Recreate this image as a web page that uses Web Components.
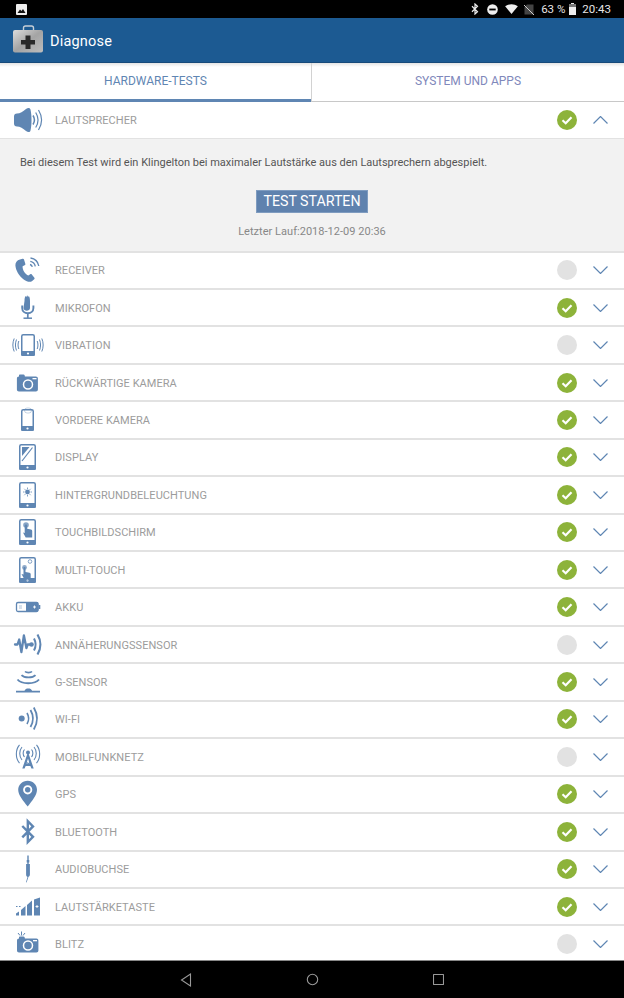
<!DOCTYPE html>
<html lang="de">
<head>
<meta charset="utf-8">
<title>Diagnose</title>
<style>
  html, body { margin: 0; padding: 0; background: #fff; }
  body { font-family: Roboto, "Liberation Sans", sans-serif; width: 624px; height: 998px; overflow: hidden; }
</style>
</head>
<body>
<x-diagnose-app>
  <x-status-bar slot="status"></x-status-bar>
  <x-app-bar slot="bar" title="Diagnose"></x-app-bar>
  <x-tabs slot="tabs"></x-tabs>
  <x-test-row slot="list" icon="speaker" label="LAUTSPRECHER" state="ok" open>
    <x-test-detail
      text="Bei diesem Test wird ein Klingelton bei maximaler Lautstärke aus den Lautsprechern abgespielt."
      action="TEST STARTEN"
      last="Letzter Lauf:2018-12-09 20:36"></x-test-detail>
  </x-test-row>
  <x-test-row slot="list" icon="receiver" label="RECEIVER"></x-test-row>
  <x-test-row slot="list" icon="mic" label="MIKROFON" state="ok"></x-test-row>
  <x-test-row slot="list" icon="vibration" label="VIBRATION"></x-test-row>
  <x-test-row slot="list" icon="camera" label="RÜCKWÄRTIGE KAMERA" state="ok"></x-test-row>
  <x-test-row slot="list" icon="frontcam" label="VORDERE KAMERA" state="ok"></x-test-row>
  <x-test-row slot="list" icon="display" label="DISPLAY" state="ok"></x-test-row>
  <x-test-row slot="list" icon="backlight" label="HINTERGRUNDBELEUCHTUNG" state="ok"></x-test-row>
  <x-test-row slot="list" icon="touch" label="TOUCHBILDSCHIRM" state="ok"></x-test-row>
  <x-test-row slot="list" icon="multitouch" label="MULTI-TOUCH" state="ok"></x-test-row>
  <x-test-row slot="list" icon="battery" label="AKKU" state="ok"></x-test-row>
  <x-test-row slot="list" icon="proximity" label="ANNÄHERUNGSSENSOR"></x-test-row>
  <x-test-row slot="list" icon="gsensor" label="G-SENSOR" state="ok"></x-test-row>
  <x-test-row slot="list" icon="wifi" label="WI-FI" state="ok"></x-test-row>
  <x-test-row slot="list" icon="mobile" label="MOBILFUNKNETZ"></x-test-row>
  <x-test-row slot="list" icon="gps" label="GPS" state="ok"></x-test-row>
  <x-test-row slot="list" icon="bluetooth" label="BLUETOOTH" state="ok"></x-test-row>
  <x-test-row slot="list" icon="audio" label="AUDIOBUCHSE" state="ok"></x-test-row>
  <x-test-row slot="list" icon="volume" label="LAUTSTÄRKETASTE" state="ok"></x-test-row>
  <x-test-row slot="list" icon="flash" label="BLITZ"></x-test-row>
  <x-nav-bar slot="nav"></x-nav-bar>
</x-diagnose-app>

<script>
// icons are drawn in a 55x32 box: x is the screen x, y 16 is the middle of the row
const PHONE = (x, y, w, h) => `
  <rect x="${x + .75}" y="${y + .75}" width="${w - 1.5}" height="${h - 1.5}" rx="1.5" fill="none" stroke="currentColor" stroke-width="1.5"/>
  <path d="M${x} ${y + h - 5}h${w}v3.5a1.5 1.5 0 0 1-1.5 1.5h-${w - 3}a1.5 1.5 0 0 1-1.5-1.5z" fill="currentColor"/>
  <circle cx="${x + w / 2}" cy="${y + h - 2.5}" r="1.1" fill="#fff"/>`;

const ICONS = {
  speaker: `<path d="M17 9.500c3 0 6-2 9-4.500 2-1.600 4-1.500 4.500.5.800 3.500 1 7 1 10.500s-.2 7-1 10.500c-.5 2-2.500 2.100-4.500.5-3-2.500-6-4.500-9-4.500-2 0-3-1.300-3-3v-7c0-1.700 1-3 3-3z" fill="currentColor"/>
    <g fill="none" stroke="currentColor"><path d="M33 11.500c1.800 2.800 1.800 6.200 0 9" stroke-width="1.500"/><path d="M35.700 8.500c3 4.800 3 10.200 0 15" stroke-width="1.200"/><path d="M38.500 6c4 6.500 4 13.500 0 20" stroke-width="1.200"/></g>`,
  receiver: `<path d="M20 5.500l2.500-.8c.8-.2 1.300.1 1.500.8l1.300 4.200c.2.700 0 1.200-.7 1.500l-2 1c-.3 3.500 2.500 8 5.800 9.300l1.800-1.300c.6-.4 1.200-.3 1.600.2l2.600 3.400c.4.600.3 1.100-.2 1.500l-2 1.600c-2 1.500-5 1-8.500-1.500-4.700-3.300-8-9-8.300-13.800-.2-3 1.500-5.300 4.600-6.100z" fill="currentColor"/>
    <g fill="none" stroke="currentColor" stroke-width="1.300"><path d="M30 10.500c1.200.3 2 1 2.300 2.300"/><path d="M30.300 7.300c2.800.5 4.500 2.300 5 5"/><path d="M30.500 4c4.500.7 7.500 3.500 8.300 8"/></g>`,
  mic: `<path d="M24.500 9c0-2.200.3-4 1-5l.8 1 .9-1.800.9 1.800.8-1c.7 1 1.100 2.800 1.100 5v7c0 3.500-6.500 3.500-6.500 0z" fill="currentColor"/>
    <path d="M22.200 13.500v2.500c0 3.300 2.500 5.300 5.600 5.300s5.600-2 5.600-5.300v-2.500" fill="none" stroke="currentColor" stroke-width="1.900"/>
    <path d="M27.800 21v5" fill="none" stroke="currentColor" stroke-width="1.700"/><path d="M23.500 26.200h8.500" fill="none" stroke="currentColor" stroke-width="1.500"/>`,
  vibration: PHONE(21, 5, 14, 22) + `<g fill="none" stroke="currentColor" stroke-width="1"><path d="M18.800 12c-1 2.500-1 5.500 0 8M16.500 10.500c-1.400 3.500-1.400 7.500 0 11M14.200 9.500c-1.800 4.300-1.800 8.700 0 13M37.200 12c1 2.500 1 5.500 0 8M39.500 10.500c1.400 3.500 1.400 7.500 0 11M41.800 9.500c1.800 4.300 1.800 8.700 0 13"/></g>`,
  camera: `<path d="M19 9.500v-1c0-.7.4-1 1-1h3.500c.6 0 1 .3 1.200 1l.2 1h11c1.200 0 2 .8 2 2v11c0 1.200-.8 2-2 2h-17c-1.200 0-2-.8-2-2v-11c0-1.200.8-2 2-2z" fill="currentColor"/>
    <circle cx="28" cy="17.500" r="4.500" fill="none" stroke="#fff" stroke-width="1.500"/><rect x="32.500" y="11" width="4" height="1.300" fill="#fff"/>`,
  frontcam: `<rect x="24.500" y="4" width="7" height="5" rx="2.500" fill="none" stroke="currentColor" stroke-width=".6" opacity=".6"/>` + PHONE(21, 5, 13, 22),
  display: PHONE(19, 3, 17, 26) + `<path d="M22 6h7.500l-7.500 9z" fill="currentColor"/><path d="M22 20l10.500-13.500" stroke="currentColor" stroke-width="1.200" fill="none"/>`,
  backlight: PHONE(19, 3, 17, 26) + `<circle cx="27.500" cy="13" r="2.400" fill="currentColor"/><path d="M27.500 8.500v1.500M27.500 16v1.500M23 13h1.500M30.500 13H32M24.300 9.800l1 1M29.700 15.200l1 1M30.700 9.800l-1 1M25.300 15.200l-1 1" stroke="currentColor" stroke-width=".8" fill="none"/>`,
  touch: PHONE(19, 3, 17, 26) + `<circle cx="26" cy="9" r="2.800" fill="currentColor" opacity=".75"/><path d="M24.700 9.500c0-1.500 2.500-1.500 2.500 0v3.200l3.800.8c.8.200 1.200.7 1.200 1.500v6.500h-6.500l-2.700-5 1.700.6z" fill="currentColor"/>`,
  multitouch: PHONE(19, 3, 17, 26) + `<circle cx="30" cy="7.500" r="1.800" fill="none" stroke="currentColor" stroke-width="1" opacity=".75"/><circle cx="24.500" cy="13.500" r="2.400" fill="currentColor" opacity=".7"/><path d="M23.500 14c0-1.200 2-1.200 2 0v4l4 .8c.8.200 1.200.7 1.200 1.500v4.700h-6.500l-2.700-5 2 .6z" fill="currentColor"/><path d="M21.500 24c1.800 3 8 3 10 0" stroke="currentColor" fill="none" stroke-width=".7"/>`,
  battery: `<rect x="16.500" y="11.500" width="21.500" height="9" rx="1.500" fill="none" stroke="currentColor" stroke-width="1.300"/>
    <path d="M26 11h10.500c1.200 0 2 .8 2 2v6c0 1.200-.8 2-2 2H26z" fill="currentColor"/><rect x="38.500" y="14" width="1.800" height="4" fill="currentColor"/>
    <rect x="19" y="14" width="3" height="4" fill="currentColor" opacity=".25"/><path d="M33 16h3M34.500 14.500v3" stroke="#fff" stroke-width=".9"/>`,
  proximity: `<path d="M15 15.500h2.500l1.700-5 2.200 12.500 2.500-16.500 2.500 12.500 1.300-3.500h3" fill="none" stroke="currentColor" stroke-width="2.300" stroke-linejoin="round" stroke-linecap="round"/>
    <circle cx="31.500" cy="15.500" r="2.300" fill="currentColor"/>
    <path d="M34 9.500c2 3.700 2 8.300 0 12" fill="none" stroke="currentColor" stroke-width="2"/><path d="M37.500 5.500c3.800 6.200 3.800 14 0 20" fill="none" stroke="currentColor" stroke-width="2.200"/>`,
  gsensor: `<g fill="none" stroke="currentColor"><path d="M25 5.500c1.500 1.400 5.500 1.400 7 0" stroke-width="1.700"/><path d="M21.500 9.200c2.800 3 11.200 3 14 0" stroke-width="1.800"/><path d="M17.500 13.500c4 5 17.500 5 21.500 0" stroke-width="1.900"/></g>
    <path d="M16 24.700h8.500c.8-1.700 1.800-2.200 3.800-2.200s3 .5 3.800 2.200H40v1.800H16z" fill="currentColor"/>`,
  wifi: `<circle cx="21.700" cy="15.500" r="3" fill="currentColor"/><g fill="none" stroke="currentColor"><path d="M27 10c2 3.300 2 7.700 0 11" stroke-width="1.600"/><path d="M30.500 7c3 5.200 3 11.800 0 17" stroke-width="1.800"/><path d="M33.800 4.500c4 6.800 4 15.200 0 22" stroke-width="1.800"/></g>`,
  mobile: `<circle cx="28" cy="11.500" r="2" fill="currentColor"/><path d="M27.300 13l-5 14.500h2.300l1-2.500h4.800l1 2.500h2.300L28.700 13zM26.500 22.500l1.500-5 1.500 5z" fill="currentColor"/>
    <path d="M25.500 24.700l5-4M25.900 20.500l4.500 3.300" stroke="currentColor" stroke-width=".7"/>
    <g fill="none" stroke="currentColor" stroke-width="1.100"><path d="M24.500 8.500c-1.800 2-1.800 5.500 0 7.500M22 6c-3 3.500-3 9.500 0 13M19.500 3.800c-4.200 5-4.200 13.400 0 18.400M31.500 8.500c1.800 2 1.800 5.500 0 7.500M34 6c3 3.500 3 9.500 0 13M36.500 3.800c4.200 5 4.200 13.400 0 18.400"/></g>`,
  gps: `<path fill-rule="evenodd" d="M27.700 2.700c5.300 0 9.300 4 9.300 9 0 5.500-5 11-9.300 16.800-4.300-5.800-9.500-11.300-9.500-16.800 0-5 4.200-9 9.500-9zm0 4.500a4.600 4.600 0 1 0 0 9.200 4.600 4.600 0 0 0 0-9.200z" fill="currentColor"/><circle cx="27.700" cy="11.800" r="2.700" fill="currentColor"/>`,
  bluetooth: `<path d="M22.300 10l10.700 10.800L27.800 26V5.200L33 10.400 22.300 21.400" fill="none" stroke="currentColor" stroke-width="2.400"/>`,
  audio: `<path d="M27.300 2.500h1.400v4.500h.6v2.500h-.6v1.500h1.200v10.500c0 1.500-1 2-1.500 2.500l-1.800 5.500-.6-.2 1.500-5.300c-.7-.5-1.400-1-1.400-2.500V11h1.200V9.500h-.6V7h.6z" fill="currentColor"/>`,
  volume: `<g fill="currentColor"><path d="M16 24.500h3v-4l-3 2z"/><path d="M21 24.500h4.500V15l-4.500 4z"/><path d="M27 24.500h5V9.500l-5 4.500z"/><path d="M34 24.500h6V6.500l-6 2z"/></g>
    <path d="M35.500 15.500h3M37 14v3" stroke="#fff" stroke-width=".9"/><path d="M16 15.500h1.500M19 15.500h1.500" stroke="currentColor" stroke-width="1.200"/>`,
  flash: `<path d="M19 10.500v-1c0-.7.4-1 1-1h3.500c.6 0 1 .3 1.200 1l.2 1h11.500c1.200 0 2 .8 2 2v10c0 1.200-.8 2-2 2H19c-1.200 0-2-.8-2-2v-10c0-1.200.8-2 2-2z" fill="currentColor"/>
    <circle cx="28" cy="17.500" r="4.500" fill="none" stroke="#fff" stroke-width="1.500"/><rect x="33" y="12" width="4" height="1.300" fill="#fff"/>
    <path d="M21.500 3.500v4M18 5l2 2.500M25 5l-2 2.500" stroke="currentColor" stroke-width="1"/>`
};

class XDiagnoseApp extends HTMLElement {
  constructor() {
    super();
    this.attachShadow({ mode: 'open' });
    this.shadowRoot.innerHTML = `
      <style>
        :host { display: flex; flex-direction: column; width: 624px; height: 998px; overflow: hidden; background: #fff; }
        .list { flex: 1; min-height: 0; display: flex; flex-direction: column; overflow: hidden; }
      </style>
      <slot name="status"></slot>
      <slot name="bar"></slot>
      <slot name="tabs"></slot>
      <div class="list"><slot name="list"></slot></div>
      <slot name="nav"></slot>
    `;
  }
}

class XStatusBar extends HTMLElement {
  constructor() {
    super();
    this.attachShadow({ mode: 'open' });
    this.shadowRoot.innerHTML = `
      <style>
        :host { display: flex; align-items: center; height: 18px; flex: none; background: #000; color: #e6e6e6; font: 11.5px/18px Roboto, sans-serif; padding: 0 13px 0 16px; box-sizing: border-box; }
        svg { display: block; flex: none; }
        .gap { flex: 1; }
        .pct { margin: 0 4px 0 7px; }
        .time { margin-left: 6px; }
      </style>
      <svg width="11" height="11" viewBox="0 0 11 11"><rect width="11" height="11" rx="1" fill="#eee"/><path d="M1.500 9l2.500-3.500 1.500 1.500 1.500-2 2.500 4z" fill="#111"/></svg>
      <div class="gap"></div>
      <svg width="8" height="12" viewBox="0 0 8 12" style="margin-right:8px"><path d="M1 3.300l5.500 5.400L4 11V1l2.500 2.300L1 8.700" fill="none" stroke="#eee" stroke-width="1.200"/></svg>
      <svg width="11" height="11" viewBox="0 0 12 12" style="margin-right:7px"><circle cx="6" cy="6" r="5.800" fill="#eee"/><rect x="2.500" y="5" width="7" height="2" fill="#000"/></svg>
      <svg width="13" height="10" viewBox="0 0 14 11" style="margin-right:6px"><path d="M0 2.500C4 -.6 10-.6 14 2.500L7 11z" fill="#eee"/></svg>
      <svg width="10" height="11" viewBox="0 0 10 11"><path d="M3 .5h6.500v10H.5V3z" fill="#444"/><path d="M0 1l10 10" stroke="#ccc" stroke-width="1"/></svg>
      <span class="pct">63 %</span>
      <svg width="7" height="12" viewBox="0 0 7 12"><path d="M2 0h3v1h2v11H0V1h2z" fill="#eee"/><path d="M0 1h7v3H0z" fill="#777"/></svg>
      <span class="time">20:43</span>
    `;
  }
}

class XAppBar extends HTMLElement {
  constructor() {
    super();
    this.attachShadow({ mode: 'open' });
    this.shadowRoot.innerHTML = `
      <style>
        :host { display: flex; align-items: center; gap: 7px; height: 44px; flex: none; background: #1c5a92; padding-left: 13px; border-bottom: 1px solid #174a7a; }
        h1 { margin: 0; padding-top: 2px; font: 400 14.5px Roboto, sans-serif; color: #fff; letter-spacing: .2px; }
        svg { display: block; flex: none; margin-bottom: 3px; }
      </style>
      <svg width="30" height="28" viewBox="0 0 30 28">
        <defs><linearGradient id="case" x1="0" y1="0" x2="1" y2="1"><stop offset="0" stop-color="#dcdcdc"/><stop offset=".5" stop-color="#a4a4a4"/><stop offset="1" stop-color="#bdbdbd"/></linearGradient></defs>
        <path d="M10.500 6V3c0-1.200.8-2 2-2h6c1.200 0 2 .8 2 2v3" fill="none" stroke="#c8d0d8" stroke-width="1.400"/>
        <rect x="0" y="5" width="30" height="22.500" rx="2" fill="url(#case)"/>
        <path d="M12.500 10.500h5v4.500H22v4.500h-4.500V24h-5v-4.500H8V15h4.500z" fill="#2a2a2a"/>
      </svg>
      <h1></h1>
    `;
  }
  connectedCallback() {
    this.shadowRoot.querySelector('h1').textContent = this.getAttribute('title');
  }
}

class XTabs extends HTMLElement {
  constructor() {
    super();
    this.attachShadow({ mode: 'open' });
    this.shadowRoot.innerHTML = `
      <style>
        :host { display: grid; grid-template-columns: 311px 1fr; height: 39px; flex: none; font: 12px Roboto, sans-serif; background: linear-gradient(#e4e4e4, #fff 4px); }
        div { display: flex; align-items: center; justify-content: center; box-sizing: border-box; }
        .on { color: #5f86b3; border-bottom: 3px solid #5f86b3; }
        .off { color: #7f88bb; border-left: 1px solid #d2d2d2; border-bottom: 1px solid #c8c8c8; padding-bottom: 2px; }
      </style>
      <div class="on">HARDWARE-TESTS</div>
      <div class="off">SYSTEM UND APPS</div>
    `;
  }
}

class XTestRow extends HTMLElement {
  constructor() {
    super();
    this.attachShadow({ mode: 'open' });
    this.shadowRoot.innerHTML = `
      <style>
        :host { display: block; flex: none; }
        .row { display: flex; align-items: center; height: 37.45px; box-sizing: border-box; border-bottom: 2.5px solid #e2e2e2; padding-right: 16px; background: #fff; color: #5f86b3; }
        :host([open]) .row { border-bottom-width: 1.5px; height: 37px; }
        svg.icon { display: block; flex: none; width: 55px; height: 32px; }
        .label { flex: 1; padding-top: 1px; font: 11px Roboto, sans-serif; color: #9c9c9c; letter-spacing: .05px; white-space: nowrap; }
        .state { flex: none; width: 20px; height: 20px; border-radius: 50%; background: #e2e2e2; margin-right: 16px; }
        .state.ok { background: #8db33a; }
        .state svg { display: block; }
        .chev { display: block; flex: none; width: 15px; height: 8px; }
      </style>
      <div class="row">
        <svg class="icon" viewBox="0 0 55 32"></svg>
        <span class="label"></span>
        <div class="state"></div>
        <svg class="chev" viewBox="0 0 15 8"><path fill="none" stroke="#5f86b3" stroke-width="1.200"/></svg>
      </div>
      <slot></slot>
    `;
  }
  connectedCallback() {
    const root = this.shadowRoot;
    root.querySelector('.icon').innerHTML = ICONS[this.getAttribute('icon')] || '';
    root.querySelector('.label').textContent = this.getAttribute('label');
    if (this.getAttribute('state') === 'ok') {
      const st = root.querySelector('.state');
      st.classList.add('ok');
      st.innerHTML = '<svg width="20" height="20" viewBox="0 0 20 20"><path d="M5.500 10.300l3.200 3 5.800-6" fill="none" stroke="#fff" stroke-width="2.200"/></svg>';
    }
    root.querySelector('.chev path').setAttribute('d', this.hasAttribute('open') ? 'M.5 7.500l7-7 7 7' : 'M.5.500l7 7 7-7');
  }
}

class XTestDetail extends HTMLElement {
  constructor() {
    super();
    this.attachShadow({ mode: 'open' });
    this.shadowRoot.innerHTML = `
      <style>
        :host { display: flex; flex-direction: column; align-items: center; box-sizing: border-box; height: 113.5px; background: #f2f2f2; border-bottom: 2.5px solid #e2e2e2; font-family: Roboto, sans-serif; padding-top: 17px; }
        p { margin: 0; align-self: stretch; padding-left: 20px; font-size: 11px; line-height: 14px; color: #555; }
        button { margin-top: 19.500px; width: 112px; height: 23px; padding: 0; border: 1px solid #7f9cc0; background: #5f82ae; color: #fff; font: 14.2px Roboto, sans-serif; }
        span { margin-top: 12.500px; font-size: 11px; line-height: 14px; color: #888; letter-spacing: .03px; }
      </style>
      <p></p>
      <button></button>
      <span></span>
    `;
  }
  connectedCallback() {
    const root = this.shadowRoot;
    root.querySelector('p').textContent = this.getAttribute('text');
    root.querySelector('button').textContent = this.getAttribute('action');
    root.querySelector('span').textContent = this.getAttribute('last');
  }
}

class XNavBar extends HTMLElement {
  constructor() {
    super();
    this.attachShadow({ mode: 'open' });
    this.shadowRoot.innerHTML = `
      <style>
        :host { display: grid; grid-template-columns: repeat(3, 126px); justify-content: center; align-items: center; height: 38px; box-sizing: border-box; flex: none; background: #000; border-top: 1px solid #888; }
        svg { display: block; justify-self: center; }
      </style>
      <svg width="12" height="14" viewBox="0 0 12 14"><path d="M10.500 1v12L1.500 7z" fill="none" stroke="#999" stroke-width="1.100"/></svg>
      <svg width="13" height="13" viewBox="0 0 13 13"><circle cx="6.500" cy="6.500" r="5.200" fill="none" stroke="#999" stroke-width="1.100"/></svg>
      <svg width="11" height="11" viewBox="0 0 11 11"><rect x=".5" y=".5" width="10" height="10" rx=".5" fill="none" stroke="#999" stroke-width="1.100"/></svg>
    `;
  }
}

customElements.define('x-diagnose-app', XDiagnoseApp);
customElements.define('x-status-bar', XStatusBar);
customElements.define('x-app-bar', XAppBar);
customElements.define('x-tabs', XTabs);
customElements.define('x-test-row', XTestRow);
customElements.define('x-test-detail', XTestDetail);
customElements.define('x-nav-bar', XNavBar);
</script>
</body>
</html>
